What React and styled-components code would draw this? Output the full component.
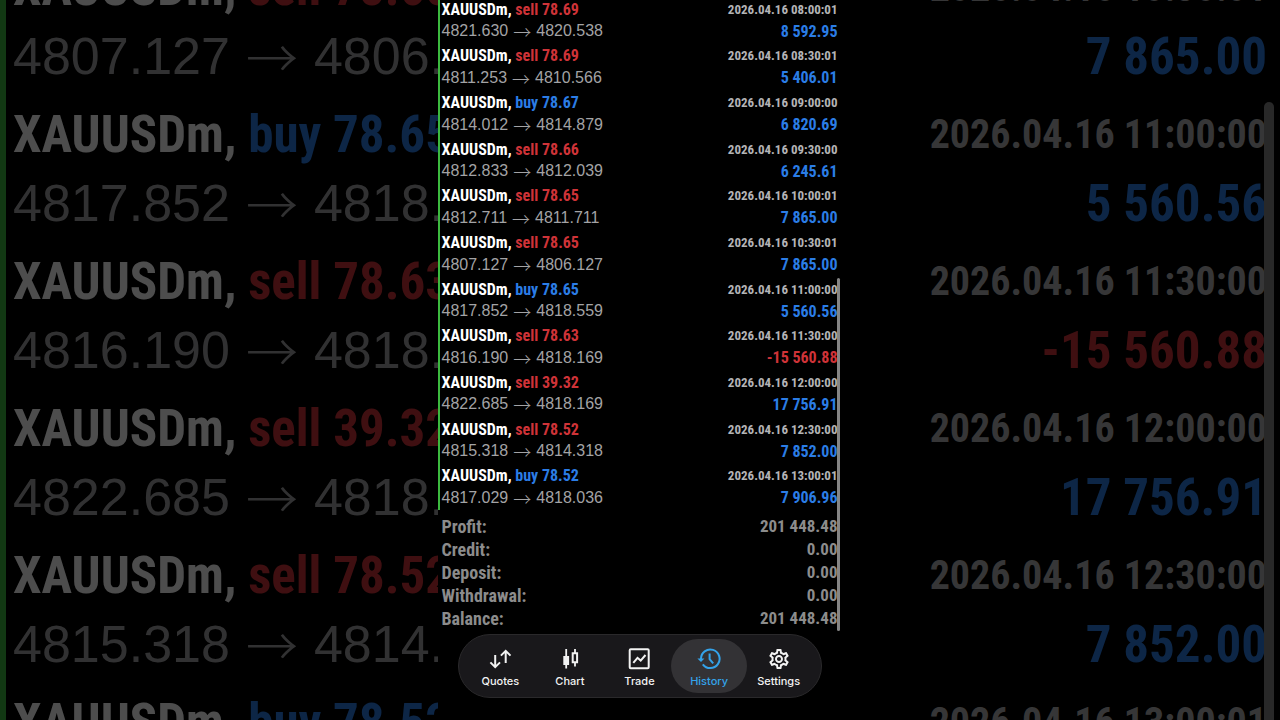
import React from 'react';
import styled, { createGlobalStyle, css } from 'styled-components';
import { MdOutlineSettings } from 'react-icons/md';

const pallete = {
  white: '#ffffff',
  price: '#a3a3a5',
  date: '#b4b4b6',
  summary: '#8c8c8c',
  buy: '#2b7de6',
  sell: '#cf3338',
  line: '#3cb93f',
  accent: '#34a3ea',
};

const narrow = `'Liberation Sans Narrow', 'Arial Narrow', 'Roboto Condensed', 'Liberation Sans', sans-serif`;

const GlobalStyle = createGlobalStyle`
  * {
    box-sizing: border-box;
  }

  body {
    margin: 0;
    background: #000;
    font-family: 'Liberation Sans', Arial, sans-serif;
  }
`;

const Page = styled.main`
  position: relative;
  display: grid;
  grid-template-columns: 1fr 405px 1fr;
  min-height: 100vh;
  overflow: hidden;
`;

const Backdrop = styled.div`
  position: absolute;
  inset: 0;
  overflow: hidden;
  opacity: 0.3;
`;

const Screen = styled.section`
  grid-column: 2;
  position: relative;
  display: flex;
  flex-direction: column;
  background: #000;
`;

const TradeList = styled.ul`
  flex: 1;
  display: flex;
  flex-direction: column;
  margin: -3px 0 0;
  padding: 0 5px 0 2px;
  list-style: none;
  border-left: 2px solid ${pallete.line};

  ${({ $large }) =>
    $large &&
    css`
      margin-top: -52px;
      padding: 0 13px 0 7px;
      border-left-width: 6px;
    `}
`;

const TradeRow = styled.li`
  flex: 1;
  display: flex;
  flex-direction: column;
  justify-content: center;

  ${({ $large }) =>
    $large &&
    css`
      flex: 0 0 147px;
    `}
`;

const Line = styled.div`
  display: flex;
  justify-content: space-between;
  align-items: center;
  height: ${({ $large }) => ($large ? '69px' : '22px')};
  white-space: nowrap;
`;

const Deal = styled.span`
  font-family: ${narrow};
  font-weight: bold;
  font-size: ${({ $large }) => ($large ? '51px' : '16px')};
  color: ${pallete.white};
`;

const Side = styled.span`
  color: ${({ $type }) => pallete[$type]};
`;

const DealTime = styled.time`
  font-family: ${narrow};
  font-weight: bold;
  font-size: ${({ $large }) => ($large ? '40px' : '13px')};
  color: ${pallete.date};
`;

const Price = styled.span`
  display: flex;
  align-items: center;
  gap: ${({ $large }) => ($large ? '16px' : '5px')};
  font-size: ${({ $large }) => ($large ? '52px' : '16px')};
  color: ${pallete.price};
`;

const Arrow = styled.span`
  font-family: 'Noto Sans CJK JP', sans-serif;
  font-weight: 300;
  font-size: ${({ $large }) => ($large ? '52px' : '18px')};
  line-height: 1;
`;

const Amount = styled.span`
  font-family: ${narrow};
  font-weight: bold;
  font-size: ${({ $large }) => ($large ? '51px' : '16px')};
  color: ${({ $loss }) => ($loss ? pallete.sell : pallete.buy)};
`;

const Summary = styled.dl`
  margin: 0;
  padding: 5px 5px 4px 4px;
  font-family: ${narrow};
  font-weight: bold;
  font-size: 18px;
  line-height: 23px;
  color: ${pallete.summary};
`;

const SummaryRow = styled.div`
  display: flex;
  justify-content: space-between;

  dd {
    margin: 0;
    font-size: 17px;
  }
`;

const ScrollThumb = styled.span`
  position: absolute;
  top: 278px;
  right: 3px;
  bottom: 89px;
  width: 3px;
  border-radius: 2px;
  background: #858585;

  ${({ $large }) =>
    $large &&
    css`
      top: 102px;
      right: 6px;
      bottom: 0;
      width: 10px;
      border-radius: 5px 5px 0 0;
    `}
`;

const TabBar = styled.nav`
  display: grid;
  grid-template-columns: repeat(5, 1fr);
  height: 64px;
  margin: 0 21px 22px 20px;
  padding: 4px 7px;
  border: 1px solid #2a292b;
  border-radius: 32px;
  background: #19181b;
`;

const TabButton = styled.button`
  display: flex;
  flex-direction: column;
  align-items: center;
  justify-content: center;
  gap: 3px;
  margin: 0 -3px;
  padding: 2px 0 0;
  border: none;
  border-radius: 28px;
  background: ${({ $active }) => ($active ? '#333235' : 'transparent')};
  color: ${({ $active }) => ($active ? pallete.accent : '#f2f2f2')};
  font-family: Inter, sans-serif;
  font-weight: 500;
  font-size: 11px;
  line-height: 14px;

  svg {
    width: 24px;
    height: 24px;
  }
`;

const QuotesIcon = () => (
  <svg viewBox="0 0 24 24" fill="none" stroke="currentColor" strokeWidth="2">
    <path d="M7.2 8v12M2.4 15.4l4.8 4.8 4.8-4.8M17.7 16V4M12.9 8.6l4.8-4.8 4.8 4.8" />
  </svg>
);

const ChartIcon = () => (
  <svg viewBox="0 0 24 24" fill="none" stroke="currentColor">
    <path d="M5.3 9h5.8v9H5.3z" fill="currentColor" stroke="none" />
    <path d="M8.2 2v19.4M17 2v4M17 15.5v4" strokeWidth="1.8" />
    <path d="M14.7 6.2h4.4v9h-4.4z" strokeWidth="2" />
  </svg>
);

const TradeIcon = () => (
  <svg viewBox="0 0 24 24" fill="none" stroke="currentColor" strokeWidth="2">
    <rect x="2.7" y="2.3" width="19" height="19" rx="1" />
    <path d="M6.3 15.8l4.2-5 3.2 2.8 4.8-5.6" />
  </svg>
);

const HistoryIcon = () => (
  <svg viewBox="0 0 24 24" fill="none" stroke="currentColor" strokeWidth="2">
    <path d="M4 12a9.3 9.3 0 1 1 1.8 5.3" />
    <path d="M.4 11.4h7L4 15z" fill="currentColor" stroke="none" />
    <path d="M12.6 6.4v5.8l3.6 4.2" />
  </svg>
);

const trades = [
  ['sell', '78.69', '08:00:01', '4821.630', '4820.538', '8 592.95'],
  ['sell', '78.69', '08:30:01', '4811.253', '4810.566', '5 406.01'],
  ['buy', '78.67', '09:00:00', '4814.012', '4814.879', '6 820.69'],
  ['sell', '78.66', '09:30:00', '4812.833', '4812.039', '6 245.61'],
  ['sell', '78.65', '10:00:01', '4812.711', '4811.711', '7 865.00'],
  ['sell', '78.65', '10:30:01', '4807.127', '4806.127', '7 865.00'],
  ['buy', '78.65', '11:00:00', '4817.852', '4818.559', '5 560.56'],
  ['sell', '78.63', '11:30:00', '4816.190', '4818.169', '-15 560.88'],
  ['sell', '39.32', '12:00:00', '4822.685', '4818.169', '17 756.91'],
  ['sell', '78.52', '12:30:00', '4815.318', '4814.318', '7 852.00'],
  ['buy', '78.52', '13:00:01', '4817.029', '4818.036', '7 906.96'],
];

const summary = [
  ['Profit:', '201 448.48'],
  ['Credit:', '0.00'],
  ['Deposit:', '0.00'],
  ['Withdrawal:', '0.00'],
  ['Balance:', '201 448.48'],
];

const tabs = [
  ['Quotes', QuotesIcon],
  ['Chart', ChartIcon],
  ['Trade', TradeIcon],
  ['History', HistoryIcon],
  ['Settings', MdOutlineSettings],
];

const Trades = ({ items, large }) => (
  <TradeList $large={large}>
    {items.map(([type, volume, time, open, close, amount]) => (
      <TradeRow key={time} $large={large}>
        <Line $large={large}>
          <Deal $large={large}>
            XAUUSDm, <Side $type={type}>{type} {volume}</Side>
          </Deal>
          <DealTime $large={large}>2026.04.16 {time}</DealTime>
        </Line>
        <Line $large={large}>
          <Price $large={large}>
            <span>{open}</span>
            <Arrow $large={large}>→</Arrow>
            <span>{close}</span>
          </Price>
          <Amount $large={large} $loss={amount.startsWith('-')}>
            {amount}
          </Amount>
        </Line>
      </TradeRow>
    ))}
  </TradeList>
);

const App = () => {
  return (
    <>
      <GlobalStyle />
      <Page>
        <Backdrop aria-hidden="true">
          <Trades items={trades.slice(5)} large />
          <ScrollThumb $large />
        </Backdrop>
        <Screen>
          <Trades items={trades} />
          <Summary>
            {summary.map(([label, value]) => (
              <SummaryRow key={label}>
                <dt>{label}</dt>
                <dd>{value}</dd>
              </SummaryRow>
            ))}
          </Summary>
          <ScrollThumb />
          <TabBar>
            {tabs.map(([label, Icon]) => (
              <TabButton key={label} type="button" $active={label === 'History'}>
                <Icon />
                {label}
              </TabButton>
            ))}
          </TabBar>
        </Screen>
      </Page>
    </>
  );
};

export default App;
